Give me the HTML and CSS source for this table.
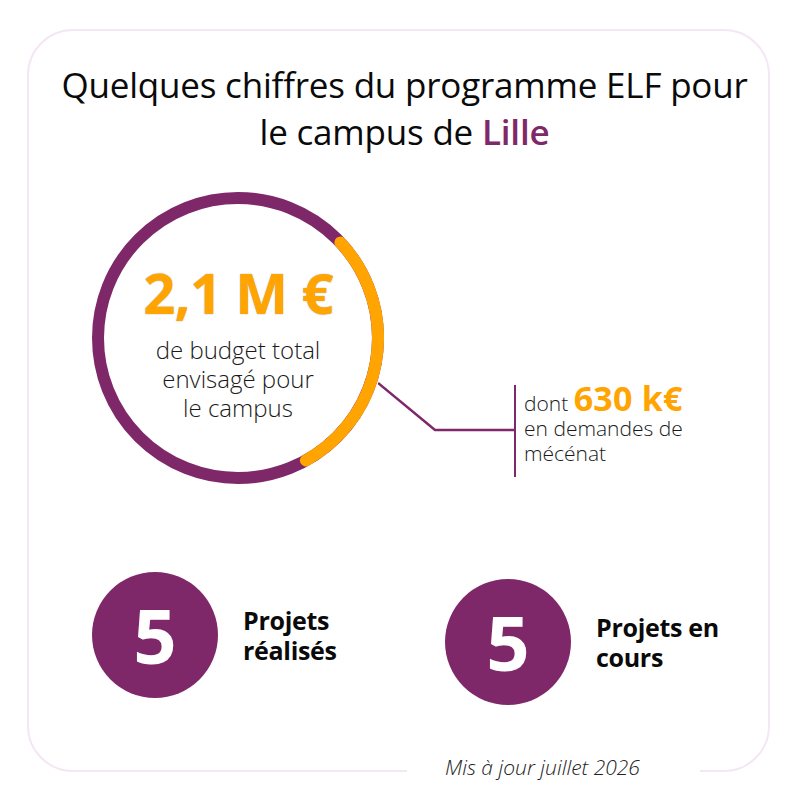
FILE: index.html
```html
<!DOCTYPE html>
<html lang="fr">
<head>
<meta charset="utf-8">
<title>Chiffres ELF Lille</title>
<link rel="stylesheet" href="styles.css">
</head>
<body>
<div class="card">
  <h1 class="title">Quelques chiffres du programme ELF pour<br>le campus de <span class="city">Lille</span></h1>

  <div class="diagram">
    <div class="ring">
      <svg class="ring-svg" width="292" height="292" viewBox="0 0 292 292">
        <circle cx="146" cy="146" r="140" fill="none" stroke="#7f2869" stroke-width="12"/>
        <path d="M248.4 50.5 A140 140 0 0 1 213.9 268.4" fill="none" stroke="#ffa400" stroke-width="12" stroke-linecap="round"/>
      </svg>
      <div class="ring-text">
        <div class="big-number">2,1 M €</div>
        <div class="ring-desc">de budget total<br>envisagé pour<br>le campus</div>
      </div>
    </div>
    <svg class="connector" width="137" height="50" viewBox="0 0 137 50">
      <polyline points="0,1 57,48 137,48" fill="none" stroke="#7f2869" stroke-width="2.5"/>
    </svg>
    <div class="callout">
      <div class="callout-head">dont <span class="callout-num">630 k€</span></div>
      <div class="callout-body">en demandes de<br>mécénat</div>
    </div>
  </div>

  <div class="stats">
    <div class="stat">
      <div class="stat-circle">5</div>
      <div class="stat-label">Projets<br>réalisés</div>
    </div>
    <div class="stat stat-second">
      <div class="stat-circle">5</div>
      <div class="stat-label">Projets en<br>cours</div>
    </div>
  </div>

  <div class="footer">Mis à jour juillet 2026</div>
</div>
</body>
</html>
```

FILE: styles.css
```css
* { box-sizing: border-box; }

html, body {
  margin: 0;
  padding: 0;
  background: #ffffff;
  min-height: 800px;
}

body {
  font-family: "Open Sans", "Noto Sans", sans-serif;
  color: #111111;
}

.card {
  position: relative;
  width: 743px;
  height: 743px;
  margin: 29px 0 0 27px;
  border: 2px solid #f4e7f4;
  border-radius: 46px;
  padding-top: 30px;
}

.title {
  margin: 0;
  padding-left: 12px;
  text-align: center;
  font-size: 35px;
  line-height: 47px;
  font-weight: 500;
  color: #0a0a0a;
  letter-spacing: -0.2px;
}

.city {
  color: #7f2869;
  font-weight: 600;
}

.diagram {
  display: flex;
  align-items: flex-start;
  margin-top: 37px;
  margin-left: 63px;
}

.ring {
  display: grid;
  width: 292px;
  height: 292px;
  flex: none;
}

.ring > * {
  grid-area: 1 / 1;
}

.ring-svg {
  display: block;
}

.ring-text {
  align-self: start;
  justify-self: center;
  text-align: center;
  padding-top: 70px;
}

.big-number {
  font-size: 56px;
  line-height: 60px;
  font-weight: 700;
  color: #ffa400;
  letter-spacing: -0.6px;
  text-shadow: 0 0 1.5px rgba(0, 0, 0, 0.35);
}

.ring-desc {
  margin-top: 13px;
  font-size: 24px;
  line-height: 29px;
  font-weight: 300;
  color: #1a1a1a;
}

.connector {
  display: block;
  flex: none;
  margin-left: -6px;
  margin-top: 190px;
}

.callout {
  margin-top: 193px;
  height: 92px;
  border-left: 2.5px solid #7f2869;
  padding-left: 8px;
  margin-left: -1px;
  font-size: 21px;
  font-weight: 300;
  color: #1a1a1a;
}

.callout-head {
  line-height: 26px;
}

.callout-num {
  font-size: 34px;
  font-weight: 700;
  color: #ffa400;
  letter-spacing: 0.2px;
}

.callout-body {
  line-height: 25px;
}

.stats {
  display: flex;
  align-items: flex-start;
  margin-top: 88px;
  margin-left: 63px;
}

.stat {
  display: flex;
  align-items: center;
  gap: 25px;
}

.stats .stat:first-child {
  width: 353px;
}

.stat-second {
  margin-top: 7px;
}

.stat-circle {
  width: 126px;
  height: 126px;
  border-radius: 50%;
  background: #7f2869;
  color: #ffffff;
  display: flex;
  align-items: center;
  justify-content: center;
  font-size: 76px;
  font-weight: 700;
  line-height: 1;
  flex: none;
}

.stat-label {
  font-size: 25px;
  line-height: 30px;
  font-weight: 700;
  color: #0a0a0a;
  letter-spacing: -0.3px;
}

.footer {
  position: absolute;
  left: 378px;
  bottom: -9px;
  width: 293px;
  height: 24px;
  padding-left: 38px;
  background: #ffffff;
  font-size: 21px;
  line-height: 24px;
  font-weight: 300;
  font-style: italic;
  color: #222222;
  white-space: nowrap;
}
```
